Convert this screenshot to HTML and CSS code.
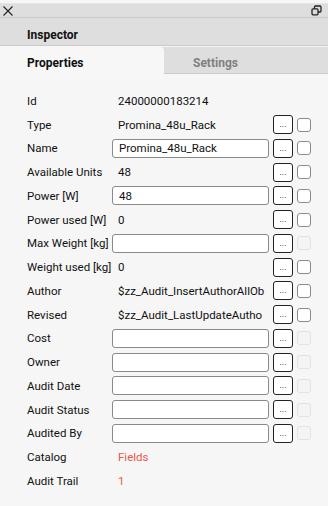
FILE: index.html
```html
<!doctype html>
<html lang="en">
<head>
<meta charset="utf-8">
<title>Inspector</title>
<link rel="stylesheet" href="styles.css">
</head>
<body>

<div class="panel">
    <div class="titlebar">
        <svg class="close" width="10" height="10" viewBox="0 0 10 10">
            <path d="M0.5 0.5L9.5 9.5M9.5 0.5L0.5 9.5" stroke="#222" stroke-width="1.1" fill="none"/>
        </svg>
        <svg class="restore" width="11" height="11" viewBox="0 0 11 11">
            <rect x="3.5" y="1" width="6.5" height="6" rx="1" fill="none" stroke="#222" stroke-width="1.3"/>
            <rect x="1" y="3.8" width="6" height="6" rx="1" fill="#ddd" stroke="#222" stroke-width="1.3"/>
        </svg>
    </div>
    <div class="header">Inspector</div>
    <div class="tabs">
        <span class="tab active">Properties</span>
        <span class="tab">Settings</span>
    </div>

    <div class="props">
        <div class="row"><span class="label">Id</span><span class="value">24000000183214</span></div>
        <div class="row"><span class="label">Type</span><span class="value">Promina_48u_Rack</span><i class="btn">...</i><i class="chk"></i></div>
        <div class="row"><span class="label">Name</span><input class="field" type="text" value="Promina_48u_Rack"><i class="btn">...</i><i class="chk"></i></div>
        <div class="row"><span class="label">Available Units</span><span class="value">48</span><i class="btn">...</i><i class="chk"></i></div>
        <div class="row"><span class="label">Power [W]</span><input class="field" type="text" value="48"><i class="btn">...</i><i class="chk"></i></div>
        <div class="row"><span class="label">Power used [W]</span><span class="value">0</span><i class="btn">...</i><i class="chk"></i></div>
        <div class="row"><span class="label">Max Weight [kg]</span><input class="field" type="text"><i class="btn">...</i><i class="chk off"></i></div>
        <div class="row"><span class="label">Weight used [kg]</span><span class="value">0</span><i class="btn">...</i><i class="chk"></i></div>
        <div class="row"><span class="label">Author</span><span class="value clip"><span>$zz_Audit_InsertAuthorAllOb</span></span><i class="btn">...</i><i class="chk"></i></div>
        <div class="row"><span class="label">Revised</span><span class="value clip"><span>$zz_Audit_LastUpdateAutho</span></span><i class="btn">...</i><i class="chk"></i></div>
        <div class="row"><span class="label">Cost</span><input class="field" type="text"><i class="btn">...</i><i class="chk off"></i></div>
        <div class="row"><span class="label">Owner</span><input class="field" type="text"><i class="btn">...</i><i class="chk off"></i></div>
        <div class="row"><span class="label">Audit Date</span><input class="field" type="text"><i class="btn">...</i><i class="chk off"></i></div>
        <div class="row"><span class="label">Audit Status</span><input class="field" type="text"><i class="btn">...</i><i class="chk off"></i></div>
        <div class="row"><span class="label">Audited By</span><input class="field" type="text"><i class="btn">...</i><i class="chk off"></i></div>
        <div class="row"><span class="label">Catalog</span><span class="value link">Fields</span></div>
        <div class="row"><span class="label">Audit Trail</span><span class="value link">1</span></div>
    </div>
</div>

</body>
</html>
```

FILE: styles.css
```css
html,body{
    margin: 0;
    padding: 0;
}
body{
    font-family: Roboto, "Liberation Sans", sans-serif;
    font-size: 11.5px;
    color: #111;
    background-color: #f6f6f6;
}
i{
    font-style: normal;
}
.panel{
    width: 328px;
    height: 506px;
    background-color: #f6f6f6;
}
.titlebar{
    display: flex;
    justify-content: space-between;
    align-items: center;
    height: 13px;
    margin-top: 3px;
    padding: 0 6px 0 3px;
    background-color: #dedede;
    border-top: 1px solid #e6e6e6;
    border-bottom: 1px solid #c9c9c9;
}
.close,.restore{
    display: block;
}
.header{
    height: 21px;
    padding-top: 6px;
    line-height: 22px;
    padding-left: 27px;
    font-size: 12px;
    font-weight: bold;
    background-color: #dedede;
    border-bottom: 1px solid #cacaca;
}
.tabs{
    display: flex;
    height: 27px;
    margin-top: 1px;
    background-color: #dedede;
}
.tab{
    flex: 1;
    box-sizing: border-box;
    height: 27px;
    padding-left: 29px;
    line-height: 33px;
    font-size: 12px;
    font-weight: bold;
    color: #808080;
    border-bottom: 1px solid #cdcdcd;
}
.tab.active{
    flex: 0 0 164px;
    padding-left: 27px;
    color: #111;
    background-color: #f7f7f7;
    border-bottom: none;
    border-top-right-radius: 4px;
    height: 34px;
}
.props{
    padding-top: 15px;
}
.row{
    display: flex;
    align-items: center;
    height: 23.75px;
    padding-left: 27px;
}
.label{
    flex: 0 0 91px;
    white-space: nowrap;
}
.value{
    flex: 0 0 152px;
    margin-right: 3px;
    white-space: nowrap;
}
.value.clip{
    overflow: hidden;
}
.value.link{
    color: #e95652;
}
.field{
    box-sizing: border-box;
    width: 157px;
    height: 19px;
    margin: 0 4px 0 -6px;
    padding: 0 6px;
    font: inherit;
    color: #111;
    background-color: #fff;
    border: 1px solid #8a8a8a;
    border-radius: 3px;
}
.btn{
    box-sizing: border-box;
    width: 20px;
    height: 19px;
    margin-right: 4px;
    font-size: 9px;
    line-height: 17px;
    text-align: center;
    background-color: #fff;
    border: 1px solid #222;
    border-radius: 3px;
}
.chk{
    box-sizing: border-box;
    width: 14px;
    height: 14px;
    background-color: #fff;
    border: 1px solid #8a8a8a;
    border-radius: 3px;
}
.chk.off{
    background-color: #f4f4f4;
    border-color: #e2e2e2;
}
```
